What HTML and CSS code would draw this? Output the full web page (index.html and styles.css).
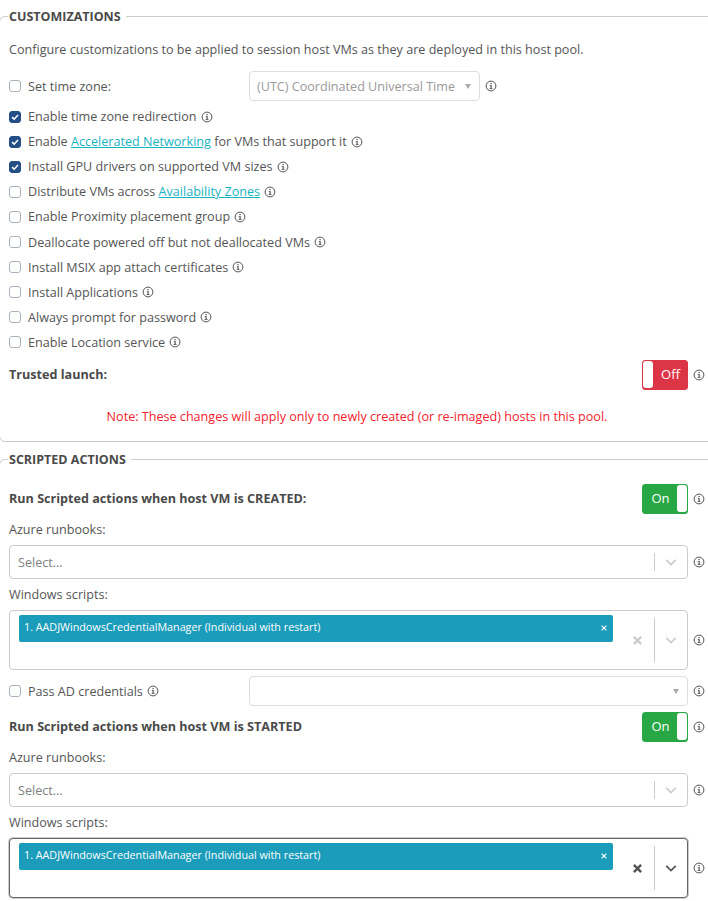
FILE: index.html
```html
<!DOCTYPE html>
<html lang="en">
<head>
<meta charset="utf-8">
<title>Customizations</title>
<link rel="stylesheet" href="styles.css">
</head>
<body>
<svg class="defs" width="0" height="0">
  <symbol id="i" viewBox="0 0 12 12">
    <circle cx="6" cy="6" r="4.9" fill="none" stroke="#555" stroke-width="1"/>
    <rect x="5.5" y="5.2" width="1.2" height="3.4" fill="#555"/>
    <rect x="4.6" y="8" width="3" height="0.8" fill="#555"/>
    <rect x="4.8" y="5" width="1.5" height="0.8" fill="#555"/>
    <rect x="5.4" y="3" width="1.3" height="1.2" fill="#555"/>
  </symbol>
  <symbol id="chev" viewBox="0 0 14 10">
    <path d="M1.5 2 L7 7.5 L12.5 2" fill="none" stroke="currentColor" stroke-width="2"/>
  </symbol>
  <symbol id="cross" viewBox="0 0 10 10">
    <path d="M1 1 L9 9 M9 1 L1 9" fill="none" stroke="currentColor"/>
  </symbol>
</svg>

<fieldset class="section first">
  <legend>CUSTOMIZATIONS</legend>
  <p class="intro">Configure customizations to be applied to session host VMs as they are deployed in this host pool.</p>

  <div class="row tz">
    <label class="check col-left"><span class="box"></span>Set time zone:</label>
    <div class="native disabled wide-tz"><span>(UTC) Coordinated Universal Time</span><i class="caret"></i></div>
    <svg class="info"><use href="#i"/></svg>
  </div>

  <ul class="checks">
    <li><span class="box on"><svg viewBox="0 0 12 12"><path d="M2.5 6.2 L5 8.6 L9.6 3.6" fill="none" stroke="#fff" stroke-width="1.9"/></svg></span>Enable time zone redirection<svg class="info"><use href="#i"/></svg></li>
    <li><span class="box on"><svg viewBox="0 0 12 12"><path d="M2.5 6.2 L5 8.6 L9.6 3.6" fill="none" stroke="#fff" stroke-width="1.9"/></svg></span>Enable&nbsp;<a href="#">Accelerated Networking</a>&nbsp;for VMs that support it<svg class="info"><use href="#i"/></svg></li>
    <li><span class="box on"><svg viewBox="0 0 12 12"><path d="M2.5 6.2 L5 8.6 L9.6 3.6" fill="none" stroke="#fff" stroke-width="1.9"/></svg></span>Install GPU drivers on supported VM sizes<svg class="info"><use href="#i"/></svg></li>
    <li><span class="box"></span>Distribute VMs across&nbsp;<a href="#">Availability Zones</a><svg class="info"><use href="#i"/></svg></li>
    <li><span class="box"></span>Enable Proximity placement group<svg class="info"><use href="#i"/></svg></li>
    <li><span class="box"></span>Deallocate powered off but not deallocated VMs<svg class="info"><use href="#i"/></svg></li>
    <li><span class="box"></span>Install MSIX app attach certificates<svg class="info"><use href="#i"/></svg></li>
    <li><span class="box"></span>Install Applications<svg class="info"><use href="#i"/></svg></li>
    <li><span class="box"></span>Always prompt for password<svg class="info"><use href="#i"/></svg></li>
    <li><span class="box"></span>Enable Location service<svg class="info"><use href="#i"/></svg></li>
  </ul>

  <div class="row toggle-row trusted">
    <strong>Trusted launch:</strong>
    <div class="toggle off"><span class="knob"></span><span class="txt">Off</span></div>
    <svg class="info"><use href="#i"/></svg>
  </div>
  <p class="note">Note: These changes will apply only to newly created (or re-imaged) hosts in this pool.</p>
</fieldset>

<fieldset class="section second">
  <legend>SCRIPTED ACTIONS</legend>

  <div class="row toggle-row created">
    <strong>Run Scripted actions when host VM is CREATED:</strong>
    <div class="toggle on"><span class="txt">On</span><span class="knob"></span></div>
    <svg class="info"><use href="#i"/></svg>
  </div>
  <div class="label l1">Azure runbooks:</div>
  <div class="row">
    <div class="select single"><span class="ph">Select...</span><span class="controls"><span class="sep"></span><svg class="chev"><use href="#chev"/></svg></span></div>
    <svg class="info"><use href="#i"/></svg>
  </div>
  <div class="label l2">Windows scripts:</div>
  <div class="row">
    <div class="select multi">
      <div class="tag"><span>1. AADJWindowsCredentialManager (Individual with restart)</span><svg class="tagx"><use href="#cross"/></svg></div>
      <span class="controls"><svg class="clear"><use href="#cross"/></svg><span class="sep"></span><svg class="chev"><use href="#chev"/></svg></span>
    </div>
    <svg class="info"><use href="#i"/></svg>
  </div>
  <div class="row pass">
    <label class="check col-left"><span class="box"></span>Pass AD credentials<svg class="info"><use href="#i"/></svg></label>
    <div class="native grow"><i class="caret"></i></div>
    <svg class="info"><use href="#i"/></svg>
  </div>
  <div class="row toggle-row started">
    <strong>Run Scripted actions when host VM is STARTED</strong>
    <div class="toggle on"><span class="txt">On</span><span class="knob"></span></div>
    <svg class="info"><use href="#i"/></svg>
  </div>
  <div class="label l3">Azure runbooks:</div>
  <div class="row">
    <div class="select single"><span class="ph">Select...</span><span class="controls"><span class="sep"></span><svg class="chev"><use href="#chev"/></svg></span></div>
    <svg class="info"><use href="#i"/></svg>
  </div>
  <div class="label l2">Windows scripts:</div>
  <div class="row">
    <div class="select multi focused">
      <div class="tag"><span>1. AADJWindowsCredentialManager (Individual with restart)</span><svg class="tagx"><use href="#cross"/></svg></div>
      <span class="controls"><svg class="clear"><use href="#cross"/></svg><span class="sep"></span><svg class="chev"><use href="#chev"/></svg></span>
    </div>
    <svg class="info"><use href="#i"/></svg>
  </div>
</fieldset>
</body>
</html>
```
FILE: styles.css
```css
* { box-sizing: border-box; }
html, body { margin: 0; padding: 0; height: 901px; overflow: hidden; background: #fff; }
body { font-family: "Open Sans", sans-serif; font-size: 12.6px; line-height: 17px; color: #555; }
.defs { position: absolute; }

.section {
  margin: 0 -12px 0 -1px;
  padding: 0 14px 0 9px;
  border: 1px solid #ccc;
  border-radius: 6px;
  min-width: 0;
}
.first { height: 434px; margin-top: 8px; }
.second { border-bottom: 0; height: 460px; margin-top: 9px; }
legend {
  font-weight: 700;
  font-size: 12.5px;
  line-height: 17px;
  color: #4a4a4a;
  padding: 0 5px 0 1px;
  margin-left: -1px;
}
.intro { margin: 16px 0 0; }
.row { display: flex; align-items: center; }
.row > .info { margin-left: 5px; }
.info { width: 12px; height: 12px; flex: none; }
li .info, .check .info { margin-left: 4px; }

.tz { margin-top: 13px; height: 30px; }
.col-left { width: 240px; }
.check { display: flex; align-items: center; }

.box {
  width: 12px; height: 12px; flex: none; margin-right: 7px;
  border: 1px solid #a9b1bd; border-radius: 3px; background: #fff;
  display: inline-flex;
}
.box.on { background: #234e86; border-color: #234e86; }
.box svg { width: 10px; height: 10px; }

.native {
  height: 30px; border: 1px solid #ddd; border-radius: 4px; position: relative;
  display: flex; align-items: center; padding-left: 7px; background: #fff;
}
.native.disabled { color: #999; }
.wide-tz { width: 231px; }
.grow { flex: 1; }
.caret {
  position: absolute; right: 8px; top: 50%; margin-top: -2px;
  border-left: 3px solid transparent; border-right: 3px solid transparent; border-top: 5px solid #aaa;
}

.checks { list-style: none; margin: 3px 0 0; padding: 0; }
.checks li { display: flex; align-items: center; height: 25.1px; }
a { color: #17b3c1; }

strong { font-weight: 700; color: #4a4a4a; flex: 1; margin-bottom: 2px; }
.trusted strong { margin-bottom: 0; }
.toggle-row { height: 30px; }
.trusted { margin-top: 5px; }
.toggle {
  width: 46px; height: 30px; border-radius: 3px; display: flex; color: #fff; font-size: 13px;
  align-items: center; padding-bottom: 1px;
}
.toggle.off { background: #dc3545; border: 1px solid #dc3545; }
.toggle.on { background: #28a745; border: 1px solid #28a745; }
.toggle .knob { width: 10px; height: 100%; background: #fff; border-radius: 3px; flex: none; }
.toggle .txt { flex: 1; text-align: center; padding-left: 1px; }
.note { margin: 18px 0 0; color: #f5222d; text-align: center; }

.created { margin-top: 16px; }
.label { height: 17px; }
.l1 { margin-top: 7px; margin-bottom: 7px; }
.l2 { margin-top: 7px; margin-bottom: 7px; }
.l3 { margin-top: 7px; margin-bottom: 7px; }

.select {
  flex: 1; position: relative; border: 1px solid #ccc; border-radius: 4px; background: #fff;
}
.single { height: 34px; display: flex; align-items: center; padding-left: 8px; }
.ph { color: #808080; }
.multi { height: 60px; padding: 4px 74px 0 9px; }
.tag {
  background: #1a9cba; color: #fff; height: 27px; border-radius: 2px; font-size: 10.75px;
  display: flex; align-items: flex-start; justify-content: space-between; padding: 4px 6px 0 5px;
}
.tagx { width: 6px; height: 6px; margin-top: 6px; color: #fff; stroke-width: 2; }
.controls {
  position: absolute; right: 0; top: 0; bottom: 0; display: flex; align-items: center; color: #ccc;
}
.sep { width: 1px; background: #ccc; margin: 7px 0; align-self: stretch; }
.chev { width: 12px; height: 9px; margin: 0 10px 0 10px; }
.clear { width: 9px; height: 9px; margin-right: 12px; stroke-width: 2.7; }
.focused { border-color: #666; box-shadow: 0 0 0 1px #ccc; }
.focused .controls { color: #555; }

.pass { margin-top: 6px; height: 30px; }
.started { margin-top: 6px; }
```
